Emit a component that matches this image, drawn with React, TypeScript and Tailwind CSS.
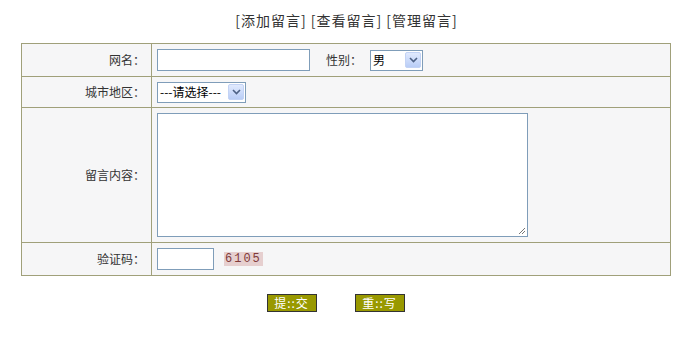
import React from "react";

function Arrow() {
  return (
    <span className="flex h-[16px] w-[16px] items-center justify-center rounded-[2px] border border-[#c3d3f5] bg-gradient-to-b from-[#e1eafe] to-[#b9cdf6]">
      <svg width="9" height="6" viewBox="0 0 9 6">
        <path d="M1 1 L4.5 4.5 L8 1" fill="none" stroke="#4d6185" strokeWidth="1.6" />
      </svg>
    </span>
  );
}

function FakeSelect({ text, width }: { text: string; width: string }) {
  return (
    <div className={`flex h-[21px] ${width} items-center justify-between border border-[#7f9db9] bg-white pl-[2px] pr-[1px]`}>
      <span className="text-[12px] leading-none text-black">{text}</span>
      <Arrow />
    </div>
  );
}

export default function App() {
  const font = { fontFamily: '"Noto Sans CJK SC", "Noto Sans", sans-serif' };
  return (
    <div className="h-[337px] w-[695px] bg-white text-[12px] text-[#333]" style={font}>
      <div className="flex h-[43px] items-start justify-center pt-[10px] text-[14px] leading-[20px] text-[#333]">
        <span className="mr-[2px] tracking-[1px]">[添加留言] [查看留言] [管理留言]</span>
      </div>
      <table className="ml-[21px] w-[650px] border-collapse bg-[#f6f6f7]">
        <tbody>
          <tr className="h-[33px]">
            <td className="w-[130px] border border-[#a0a07a] pr-[6px] text-right">网名：</td>
            <td className="border border-[#a0a07a] pl-[5px]">
              <div className="flex items-center">
                <div className="h-[22px] w-[153px] border border-[#7f9db9] bg-white" />
                <span className="ml-[16px] mr-[8px]">性别：</span>
                <FakeSelect text="男" width="w-[53px]" />
              </div>
            </td>
          </tr>
          <tr className="h-[31px]">
            <td className="border border-[#a0a07a] pr-[6px] text-right">城市地区：</td>
            <td className="border border-[#a0a07a] pl-[5px]">
              <FakeSelect text="---请选择---" width="w-[89px]" />
            </td>
          </tr>
          <tr className="h-[135px]">
            <td className="border border-[#a0a07a] pr-[6px] text-right">留言内容：</td>
            <td className="border border-[#a0a07a] pl-[5px]">
              <div className="relative h-[124px] w-[371px] border border-[#7f9db9] bg-white">
                <svg className="absolute bottom-[1px] right-[1px]" width="9" height="9" viewBox="0 0 9 9">
                  <path d="M8 2 L2 8 M8 5 L5 8" stroke="#777" strokeWidth="1" />
                </svg>
              </div>
            </td>
          </tr>
          <tr className="h-[33px]">
            <td className="border border-[#a0a07a] pr-[6px] text-right">验证码：</td>
            <td className="border border-[#a0a07a] pl-[5px]">
              <div className="flex items-center">
                <div className="h-[22px] w-[57px] border border-[#7f9db9] bg-white" />
                <span
                  className="ml-[10px] bg-[#e6cfcf] px-[1px] text-[12px] leading-[14px] tracking-[2px] text-[#803a3a]"
                  style={{ fontFamily: '"Liberation Mono", monospace' }}
                >
                  6105
                </span>
              </div>
            </td>
          </tr>
        </tbody>
      </table>
      <div className="mt-[18px] flex justify-center gap-[38px] pr-[24px]">
        <div className="flex h-[18px] w-[50px] items-center justify-center border border-[#333] bg-[#999900] text-[12px] leading-none tracking-[1px] text-white">
          提::交
        </div>
        <div className="flex h-[18px] w-[50px] items-center justify-center border border-[#333] bg-[#999900] text-[12px] leading-none tracking-[1px] text-white">
          重::写
        </div>
      </div>
    </div>
  );
}
